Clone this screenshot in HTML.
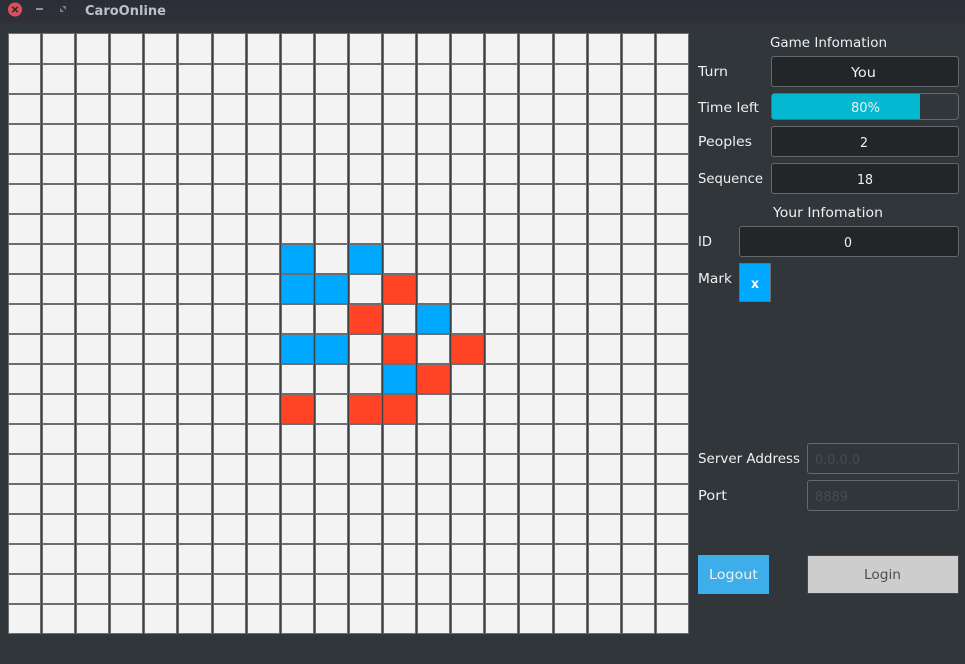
<!DOCTYPE html>
<html>
<head>
<meta charset="utf-8">
<style>
html,body{margin:0;padding:0;width:965px;height:664px;overflow:hidden;background:#31363b}
svg{position:absolute;left:0;top:0;display:block}
text{font-family:"DejaVu Sans","Liberation Sans",sans-serif;font-size:13.5px;fill:#eff0f1}
</style>
</head>
<body>
<svg width="965" height="664" viewBox="0 0 965 664" xmlns="http://www.w3.org/2000/svg" shape-rendering="crispEdges">
<defs>
<linearGradient id="tb" x1="0" y1="0" x2="0" y2="1"><stop offset="0" stop-color="#2c2e37"/><stop offset="0.8" stop-color="#2e3138"/><stop offset="1" stop-color="#31363b"/></linearGradient>
</defs>
<rect width="965" height="664" fill="#31363b"/>
<rect width="965" height="26" fill="url(#tb)"/>
<!-- window buttons -->
<circle cx="15" cy="9.5" r="7" fill="#d9515a" shape-rendering="auto"/>
<path d="M12.3 6.8l5.4 5.4M17.7 6.8l-5.4 5.4" stroke="#37292f" stroke-width="1.7" fill="none" shape-rendering="auto"/>
<rect x="36" y="8" width="7" height="2" fill="#8f9297"/>
<path d="M62 6h4v4zM60 8l4 4h-4z" fill="#7b7e83" shape-rendering="auto"/>
<text x="85" y="15" textLength="81" lengthAdjust="spacingAndGlyphs" style="font-weight:bold;font-size:13px;fill:#b9c2cc" shape-rendering="auto">CaroOnline</text>

<!-- board -->
<rect x="8" y="33" width="681" height="601" fill="#f3f3f3"/>
<path fill="#6c6f71" d="M8 33h681v1H8zM8 633h681v1H8zM8 33h1v601H8zM688 33h1v601h-1z
M40 33h3v601h-3zM74 33h3v601h-3zM108 33h3v601h-3zM142 33h3v601h-3zM176 33h3v601h-3zM211 33h3v601h-3zM245 33h3v601h-3zM279 33h3v601h-3zM313 33h3v601h-3zM347 33h3v601h-3zM381 33h3v601h-3zM415 33h3v601h-3zM449 33h3v601h-3zM483 33h3v601h-3zM517 33h3v601h-3zM552 33h3v601h-3zM586 33h3v601h-3zM620 33h3v601h-3zM654 33h3v601h-3z
M8 63h681v2H8zM8 93h681v2H8zM8 123h681v2H8zM8 153h681v2H8zM8 183h681v2H8zM8 213h681v2H8zM8 243h681v2H8zM8 273h681v2H8zM8 303h681v2H8zM8 333h681v2H8zM8 363h681v2H8zM8 393h681v2H8zM8 423h681v2H8zM8 453h681v2H8zM8 483h681v2H8zM8 513h681v2H8zM8 543h681v2H8zM8 573h681v2H8zM8 603h681v2H8z"/>
<path fill="#3c4044" d="M41 33h1v601h-1zM75 33h1v601h-1zM109 33h1v601h-1zM143 33h1v601h-1zM177 33h1v601h-1zM212 33h1v601h-1zM246 33h1v601h-1zM280 33h1v601h-1zM314 33h1v601h-1zM348 33h1v601h-1zM382 33h1v601h-1zM416 33h1v601h-1zM450 33h1v601h-1zM484 33h1v601h-1zM518 33h1v601h-1zM553 33h1v601h-1zM587 33h1v601h-1zM621 33h1v601h-1zM655 33h1v601h-1z"/>
<g fill="#00a8ff">
<rect x="282" y="245" width="31" height="28"/><rect x="350" y="245" width="31" height="28"/>
<rect x="282" y="275" width="31" height="28"/><rect x="316" y="275" width="31" height="28"/>
<rect x="418" y="305" width="31" height="28"/>
<rect x="282" y="335" width="31" height="28"/><rect x="316" y="335" width="31" height="28"/>
<rect x="384" y="365" width="31" height="28"/>
</g>
<g fill="#ff4325">
<rect x="384" y="275" width="31" height="28"/>
<rect x="350" y="305" width="31" height="28"/>
<rect x="384" y="335" width="31" height="28"/><rect x="452" y="335" width="31" height="28"/>
<rect x="418" y="365" width="31" height="28"/>
<rect x="282" y="395" width="31" height="28"/><rect x="350" y="395" width="31" height="28"/><rect x="384" y="395" width="31" height="28"/>
</g>

<!-- right panel boxes -->
<g shape-rendering="auto">
<g stroke="#65686b" stroke-width="1" fill="#232629">
<rect x="771.5" y="56.5" width="187" height="30" rx="2.5"/>
<rect x="771.5" y="126.5" width="187" height="30" rx="2.5"/>
<rect x="771.5" y="163.5" width="187" height="30" rx="2.5"/>
<rect x="739.5" y="226.5" width="219" height="30" rx="2.5"/>
</g>
<rect x="771.5" y="93.5" width="187" height="26" rx="3.5" fill="#31363b" stroke="#65686b"/>
<path d="M772 96a2 2 0 0 1 2-2h146v25H774a2 2 0 0 1-2-2z" fill="#03b8d0"/>
<rect x="739.5" y="263.5" width="31" height="38" fill="#00a8ff" stroke="#6a6e71"/>
<g stroke="#65686b" fill="#31363b">
<rect x="807.5" y="443.5" width="151" height="30" rx="2.5"/>
<rect x="807.5" y="480.5" width="151" height="30" rx="2.5"/>
</g>
<rect x="698" y="555" width="71" height="39" fill="#3daee9"/>
<rect x="807.5" y="555.5" width="151" height="38" fill="#cdcdcd" stroke="#45494d"/>

<!-- labels -->
<text x="770" y="47" textLength="117" lengthAdjust="spacingAndGlyphs">Game Infomation</text>
<text x="698" y="76" textLength="30" lengthAdjust="spacingAndGlyphs">Turn</text>
<text x="851" y="77" textLength="25" lengthAdjust="spacingAndGlyphs">You</text>
<text x="698" y="112" textLength="61" lengthAdjust="spacingAndGlyphs">Time left</text>
<text x="851" y="112" textLength="29" lengthAdjust="spacingAndGlyphs">80%</text>
<text x="698" y="146" textLength="54" lengthAdjust="spacingAndGlyphs">Peoples</text>
<text x="860" y="147" textLength="8" lengthAdjust="spacingAndGlyphs">2</text>
<text x="698" y="183" textLength="65" lengthAdjust="spacingAndGlyphs">Sequence</text>
<text x="857" y="184" textLength="16" lengthAdjust="spacingAndGlyphs">18</text>
<text x="773" y="217" textLength="110" lengthAdjust="spacingAndGlyphs">Your Infomation</text>
<text x="698" y="246" textLength="14" lengthAdjust="spacingAndGlyphs">ID</text>
<text x="844" y="247" textLength="8" lengthAdjust="spacingAndGlyphs">0</text>
<text x="698" y="283" textLength="34" lengthAdjust="spacingAndGlyphs">Mark</text>
<text x="751" y="288" textLength="8" lengthAdjust="spacingAndGlyphs" style="font-weight:bold;fill:#fff">x</text>
<text x="698" y="463" textLength="102" lengthAdjust="spacingAndGlyphs">Server Address</text>
<text x="815" y="464" textLength="45" lengthAdjust="spacingAndGlyphs" style="fill:#474b4f">0.0.0.0</text>
<text x="698" y="500" textLength="29" lengthAdjust="spacingAndGlyphs">Port</text>
<text x="815" y="501" textLength="33" lengthAdjust="spacingAndGlyphs" style="fill:#474b4f">8889</text>
<text x="709" y="579" textLength="49" lengthAdjust="spacingAndGlyphs">Logout</text>
<text x="864" y="579" textLength="37" lengthAdjust="spacingAndGlyphs" style="fill:#4b4e52">Login</text>
</g>
</svg>
</body>
</html>
